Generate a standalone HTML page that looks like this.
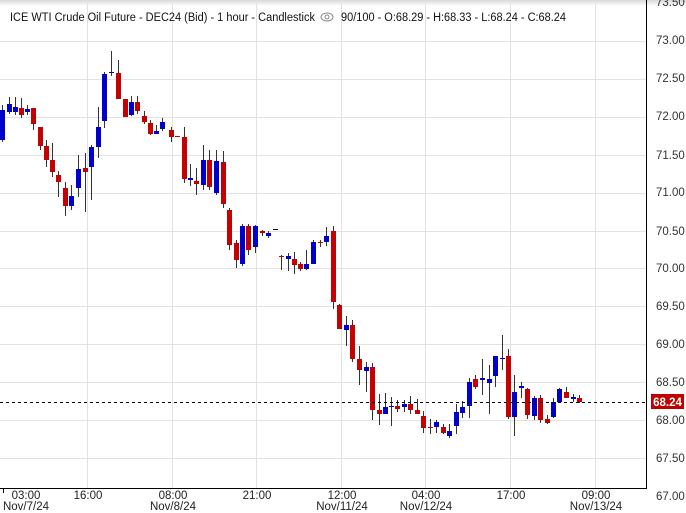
<!DOCTYPE html>
<html><head><meta charset="utf-8"><style>
html,body{margin:0;padding:0;background:#fff;width:686px;height:513px;overflow:hidden}
svg{display:block;font-family:"Liberation Sans",Arial,sans-serif}
</style></head><body>
<svg id="c" width="686" height="513" xmlns="http://www.w3.org/2000/svg">
<defs><linearGradient id="tg" x1="0" y1="0" x2="0" y2="1"><stop offset="0" stop-color="#d8d8d8"/><stop offset="1" stop-color="#fff"/></linearGradient></defs>
<rect x="0" y="0" width="686" height="6" fill="url(#tg)"/>
<g stroke="#e2e2e2" stroke-width="1">
<line x1="87.5" y1="0" x2="87.5" y2="488"/><line x1="172.5" y1="0" x2="172.5" y2="488"/><line x1="256.5" y1="0" x2="256.5" y2="488"/><line x1="341.5" y1="0" x2="341.5" y2="488"/><line x1="425.5" y1="0" x2="425.5" y2="488"/><line x1="510.5" y1="0" x2="510.5" y2="488"/><line x1="595.5" y1="0" x2="595.5" y2="488"/>
<line x1="0" y1="41.5" x2="646" y2="41.5"/><line x1="0" y1="79.5" x2="646" y2="79.5"/><line x1="0" y1="117.5" x2="646" y2="117.5"/><line x1="0" y1="155.5" x2="646" y2="155.5"/><line x1="0" y1="193.5" x2="646" y2="193.5"/><line x1="0" y1="231.5" x2="646" y2="231.5"/><line x1="0" y1="268.5" x2="646" y2="268.5"/><line x1="0" y1="306.5" x2="646" y2="306.5"/><line x1="0" y1="344.5" x2="646" y2="344.5"/><line x1="0" y1="382.5" x2="646" y2="382.5"/><line x1="0" y1="420.5" x2="646" y2="420.5"/><line x1="0" y1="458.5" x2="646" y2="458.5"/>
</g>
<line x1="646.5" y1="0" x2="646.5" y2="489" stroke="#000"/>
<line x1="0" y1="488.5" x2="647" y2="488.5" stroke="#000"/>
<line x1="3.5" y1="488" x2="3.5" y2="493" stroke="#000"/>
<g id="cd"></g>
<line x1="0" y1="402.5" x2="646" y2="402.5" stroke="#000" stroke-dasharray="3,3"/>
<rect x="651" y="394" width="33" height="15" fill="#c00000"/>
<text x="667.5" y="406" text-anchor="middle" font-size="11.5" font-weight="bold" fill="#fff">68.24</text>
<g font-size="11.5" fill="#333" text-anchor="start">
<text x="656" y="6">73.50</text>
<text x="656" y="44">73.00</text><text x="656" y="82">72.50</text><text x="656" y="120">72.00</text><text x="656" y="159">71.50</text><text x="656" y="196">71.00</text><text x="656" y="235">70.50</text><text x="656" y="272">70.00</text><text x="656" y="310">69.50</text><text x="656" y="348">69.00</text><text x="656" y="386">68.50</text><text x="656" y="424">68.00</text><text x="656" y="462">67.50</text><text x="656" y="500">67.00</text>
</g>
<g font-size="11.5" fill="#222" text-anchor="middle">
<text x="26" y="499">03:00</text><text x="26" y="510">Nov/7/24</text>
<text x="88" y="499">16:00</text>
<text x="173" y="499">08:00</text><text x="173" y="510">Nov/8/24</text>
<text x="257" y="499">21:00</text>
<text x="342" y="499">12:00</text><text x="342" y="510">Nov/11/24</text>
<text x="426" y="499">04:00</text><text x="426" y="510">Nov/12/24</text>
<text x="511" y="499">17:00</text>
<text x="596" y="499">09:00</text><text x="596" y="510">Nov/13/24</text>
</g>
<text x="10" y="21" font-size="11.5" fill="#111" textLength="305" lengthAdjust="spacingAndGlyphs">ICE WTI Crude Oil Future - DEC24 (Bid) - 1 hour - Candlestick</text>
<ellipse cx="327" cy="17" rx="6" ry="4" fill="none" stroke="#888"/><circle cx="327" cy="17" r="2" fill="none" stroke="#888"/>
<text x="341" y="21" font-size="11.5" fill="#111" textLength="225" lengthAdjust="spacingAndGlyphs">90/100 - O:68.29 - H:68.33 - L:68.24 - C:68.24</text>
</svg>
<script>
var d=[
[2,110,140,105,142,'b'],[9,104,112,97,114,'b'],[15,107,112,97,115,'b'],[21,108,115,98,118,'r'],[27,109,112,105,115,'b'],[33,108,124,108,130,'r'],
[40,127,146,127,150,'r'],[46,146,160,140,167,'r'],[52,160,172,143,177,'r'],[58,175,182,171,197,'r'],[65,188,206,182,216,'r'],[71,196,206,185,210,'b'],
[78,169,188,155,197,'b'],[85,168,172,153,212,'r'],[91,147,167,145,200,'b'],[98,127,147,107,158,'b'],[104,74,121,72,128,'b'],[111,72,73,51,76,'b'],
[118,73,99,60,99,'r'],[125,99,117,99,117,'r'],[131,102,115,96,116,'b'],[137,102,111,96,114,'r'],[144,116,122,111,124,'r'],[150,123,134,120,135,'r'],
[156,131,134,125,134,'b'],[162,122,129,118,131,'b'],[171,130,137,127,142,'r'],[177,136,137,136,137,'r'],[184,137,179,127,183,'r'],[190,178,180,164,186,'b'],
[196,181,184,168,195,'r'],[203,160,185,145,190,'b'],[209,160,187,150,190,'r'],[216,161,193,150,195,'b'],[223,162,204,151,208,'r'],[229,210,245,208,250,'r'],
[236,243,260,240,268,'r'],[242,226,264,224,266,'b'],[248,226,250,224,255,'r'],[255,226,247,225,253,'b'],[262,231,233,230,236,'r'],[268,233,236,231,238,'b'],
[275,229,230,229,230,'k'],[281,256,257,255,270,'r'],[288,256,259,253,271,'b'],[294,259,265,252,274,'r'],[300,264,269,262,271,'r'],[306,264,269,250,270,'b'],
[313,242,264,240,264,'b'],[320,242,243,240,247,'r'],[326,236,242,227,246,'b'],[333,231,302,226,309,'r'],[339,305,329,304,329,'r'],[346,325,330,316,346,'b'],
[352,325,359,320,362,'r'],[359,359,370,346,385,'r'],[366,367,371,362,392,'b'],[372,367,410,363,420,'r'],[379,410,414,394,425,'r'],[385,407,414,393,414,'b'],
[391,406,407,397,426,'b'],[397,406,409,400,412,'r'],[404,404,407,400,412,'b'],[410,404,410,396,414,'r'],[417,410,414,399,414,'r'],[423,416,428,411,433,'r'],
[430,427,428,419,434,'r'],[436,422,427,420,433,'b'],[443,427,433,424,434,'r'],[449,431,436,424,438,'b'],[456,412,426,404,434,'b'],[462,407,413,401,418,'b'],
[469,382,406,378,418,'b'],[475,379,387,375,389,'r'],[482,378,380,359,395,'b'],[489,379,383,365,414,'b'],[495,356,376,356,387,'b'],[502,358,359,335,370,'b'],
[508,356,417,349,419,'r'],[514,392,417,375,436,'b'],[521,386,388,382,398,'b'],[527,389,415,388,419,'r'],[534,398,416,396,420,'b'],[540,398,420,395,423,'r'],
[547,419,423,415,424,'r'],[553,402,417,398,418,'b'],[559,389,402,388,403,'b'],[566,392,398,387,398,'r'],[573,397,399,394,402,'b'],[579,398,402,395,403,'r']];
var g=document.getElementById('cd'),s='';
var col={r:'#c40000',b:'#0000cc',k:'#000'};
d.forEach(function(c){var c2=col[c[5]];
s+='<line x1="'+(c[0]+0.5)+'" x2="'+(c[0]+0.5)+'" y1="'+c[3]+'" y2="'+c[4]+'" stroke="#333"/>';
var h=Math.max(1,c[2]-c[1]);
s+='<rect x="'+(c[0]-2)+'" y="'+c[1]+'" width="5" height="'+h+'" fill="'+c2+'"/>';});
g.innerHTML=s;
</script>
</body></html>
